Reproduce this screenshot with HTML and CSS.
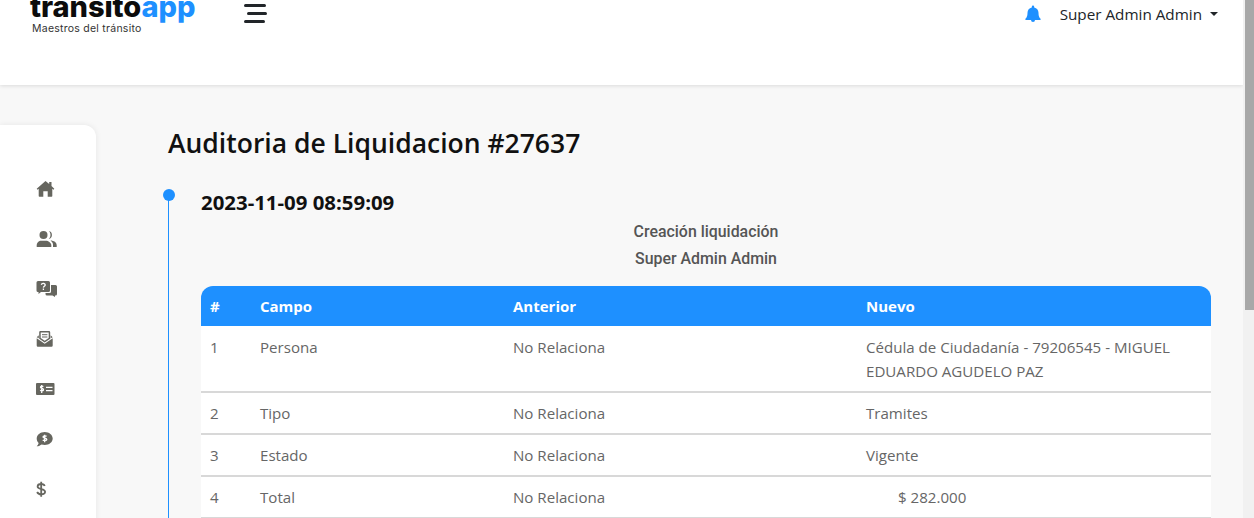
FILE: index.html
```html
<!DOCTYPE html>
<html lang="es">
<head>
<meta charset="utf-8">
<title>Auditoria de Liquidacion #27637</title>
<link rel="stylesheet" href="styles.css">
</head>
<body>
<div class="shell">
  <div class="page">
    <header class="topbar">
      <div class="brand">
        <div class="logo">tránsito<span class="logo-app">app</span></div>
        <div class="tagline">Maestros del tránsito</div>
      </div>
      <div class="burger"><span class="bar bar-a"></span><span class="bar bar-b"></span><span class="bar bar-c"></span></div>
      <div class="user">
        <svg class="bell" viewBox="0 0 16 18"><path d="M8 0.500a1.200 1.200 0 0 1 1.200 1.200v.7c2.600.5 4.300 2.600 4.300 5.300 0 3.900 1.100 5 2 6 .4.500.1 1.300-.6 1.300H1.100c-.7 0-1-.8-.6-1.300.9-1 2-2.100 2-6 0-2.700 1.700-4.800 4.300-5.300v-.7A1.200 1.200 0 0 1 8 .5zM6 15h4a2 2 0 0 1-4 0z"/></svg>
        <span class="user-name">Super Admin Admin</span>
        <span class="caret"></span>
      </div>
    </header>
    <div class="workspace">
      <nav class="sidebar">
        <svg class="nav-icon" viewBox="0 0 22 20"><path d="M9.500 2 .7 9.800l.8.9L2.700 9.700V17a.7.7 0 0 0 .7.700h3.900v-5.500h4.400v5.500h3.900a.7.7 0 0 0 .7-.7V9.700l1.200 1 .8-.9L15.500 7V3h-2.300v2L9.500 2z"/></svg>
        <svg class="nav-icon" viewBox="0 0 22 20"><circle cx="7.500" cy="6" r="4"/><path d="M.7 18v-1.800C.7 13.500 3 11.700 5 11.700h5c2 0 5.300 1.800 5.300 4.500V18z"/><path d="M12.800 2.100a4 4 0 0 1 0 7.800c1.100-1 1.700-2.400 1.700-3.900s-.6-2.900-1.700-3.900zM14.500 11.600c3.400.1 6.200 1.900 6.200 4.600V18h-3.700v-2c0-1.800-.9-3.200-2.500-4.400z"/></svg>
        <svg class="nav-icon" viewBox="0 0 22 20"><path d="M2 2h10.500A1.500 1.500 0 0 1 14 3.500v8a1.500 1.500 0 0 1-1.500 1.500H5l-2.500 2v-2H2A1.500 1.500 0 0 1 .5 11.500v-8A1.500 1.500 0 0 1 2 2z"/><path d="M15 6h4.500A1.500 1.500 0 0 1 21 7.500V15a1.500 1.500 0 0 1-1.500 1.500H19v1.500l-2.500-1.500H11a1.500 1.500 0 0 1-1.500-1.500V14h4A1.500 1.500 0 0 0 15 12.500z"/><path class="nav-cut-line" d="M5.300 5.700c.3-1 1.300-1.400 2.200-1.300 1 .1 1.800.8 1.700 1.700-.1 1.200-1.700 1.200-1.800 2.500M7.400 9.500v1.500"/></svg>
        <svg class="nav-icon" viewBox="0 0 22 20"><path d="M.7 9.200 8.700 14.800l8-5.600v7.300a1.200 1.200 0 0 1-1.200 1.200H1.900A1.200 1.200 0 0 1 .7 16.500z"/><path d="M3.200 9.700V3.200A1.200 1.200 0 0 1 4.400 2h8.600a1.200 1.200 0 0 1 1.200 1.200v6.500l-5.500 3.900zM4.700 3.500v5.500l4 2.800 4-2.800V3.500z" fill-rule="evenodd"/><path class="nav-dark-line" d="M6 5.700h5.400M6 8h5.400"/><path d="M2.800 6.200v3L.7 8.200zM14.600 6.200v3l2.100-1z"/></svg>
        <svg class="nav-icon" viewBox="0 0 22 20"><rect x="0" y="4" width="18.500" height="12" rx="1"/><path class="nav-cut-line" d="M10 8.300h6.500M10 11.700h6.500M7.300 7.700c-.5-.7-2.800-.9-2.800.5 0 1.500 3 .9 3 2.500 0 1.400-2.600 1.300-3.200.4M5.700 6v8"/></svg>
        <svg class="nav-icon" viewBox="0 0 22 20"><path d="M8.700 3c4.400 0 8 2.900 8 6.500s-3.600 6.500-8 6.500c-1.100 0-2.200-.2-3.100-.5C4.500 16.300 2.800 17.300.7 17.300c1-.9 1.800-2.200 1.900-3.300C1.400 12.800.7 11.200.7 9.500.7 5.900 4.300 3 8.700 3z"/><path class="nav-cut-line" d="M10.600 7.400c-.4-.7-3.600-1-3.600.5 0 1.500 3.800.9 3.800 2.500 0 1.400-3.300 1.300-4 .4M8.700 5.800v7.400"/></svg>
        <svg class="nav-icon" viewBox="0 0 22 20"><path class="nav-dollar" d="M8.700 7C8.200 5.500 6.700 5 5.200 5 3.200 5 1.600 6 1.600 7.500c0 3.500 7.500 1.500 7.500 5.300 0 1.500-2 2.500-4 2.500-1.700 0-3.300-.8-4-2.300M5.200 2.800v14.900"/></svg>
      </nav>
      <main class="content">
        <h1 class="title">Auditoria de Liquidacion #27637</h1>
        <section class="timeline">
          <span class="dot"></span>
          <h2 class="date">2023-11-09 08:59:09</h2>
          <p class="meta">Creación liquidación</p>
          <p class="meta">Super Admin Admin</p>
          <table class="grid">
            <thead>
              <tr><th class="c-id">#</th><th class="c-field">Campo</th><th class="c-old">Anterior</th><th class="c-new">Nuevo</th></tr>
            </thead>
            <tbody>
              <tr><td>1</td><td>Persona</td><td>No Relaciona</td><td>Cédula de Ciudadanía - 79206545 - MIGUEL EDUARDO AGUDELO PAZ</td></tr>
              <tr><td>2</td><td>Tipo</td><td>No Relaciona</td><td>Tramites</td></tr>
              <tr><td>3</td><td>Estado</td><td>No Relaciona</td><td>Vigente</td></tr>
              <tr><td>4</td><td>Total</td><td>No Relaciona</td><td><span class="money">$ 282.000</span></td></tr>
            </tbody>
          </table>
        </section>
      </main>
    </div>
  </div>
  <div class="scrollbar"><div class="thumb"></div></div>
</div>
</body>
</html>
```
FILE: styles.css
```css
html, body {
  margin: 0;
  height: 518px;
  overflow: hidden;
  background: #f8f8f8;
  font-family: "Open Sans", "Noto Sans", sans-serif;
}
.shell {
  display: flex;
  height: 518px;
  overflow: hidden;
}
.page {
  flex: 1;
  min-width: 0;
  display: flex;
  flex-direction: column;
}
.topbar {
  flex: none;
  height: 85px;
  background: #fff;
  box-shadow: 0 1px 4px rgba(0, 0, 0, .12);
  display: flex;
  align-items: flex-start;
  padding: 0 25px 0 30px;
  box-sizing: border-box;
}
.brand {
  margin-top: -11px;
  width: 214px;
}
.logo {
  font-family: Inter, sans-serif;
  font-weight: 800;
  font-size: 29px;
  line-height: 36px;
  letter-spacing: -.07px;
  color: #0c0c0c;
  white-space: nowrap;
}
.logo-app { color: #1e90ff; }
.tagline {
  font-family: Inter, sans-serif;
  font-size: 10.500px;
  line-height: 12px;
  margin: -2px 0 0 2px;
  color: #333;
  letter-spacing: .25px;
  white-space: nowrap;
}
.burger {
  display: flex;
  flex-direction: column;
  gap: 5px;
  margin-top: 4px;
  width: 24px;
}
.bar {
  display: block;
  height: 3px;
  border-radius: 2px;
  background: #212529;
}
.bar-a { width: 22px; }
.bar-b { width: 20px; margin-left: 3px; }
.bar-c { width: 21px; }
.user {
  margin-left: auto;
  display: flex;
  align-items: center;
  height: 28px;
}
.bell {
  width: 16px;
  height: 18px;
  fill: #1e90ff;
  margin-right: 19px;
}
.user-name {
  font-size: 15.250px;
  color: #212529;
}
.caret {
  width: 0;
  height: 0;
  margin-left: 8px;
  border-top: 4.500px solid #212529;
  border-left: 4.500px solid transparent;
  border-right: 4.500px solid transparent;
}
.workspace {
  flex: 1;
  display: flex;
  align-items: flex-start;
  min-height: 0;
}
.sidebar {
  flex: none;
  width: 60px;
  height: 420px;
  margin-top: 40px;
  padding: 54px 0 0 36px;
  background: #fff;
  border-radius: 0 12px 0 0;
  box-shadow: 0 0 6px rgba(0, 0, 0, .08);
  display: flex;
  flex-direction: column;
  gap: 30px;
}
.nav-icon {
  width: 22px;
  height: 20px;
  flex: none;
  fill: #66665f;
}
.nav-cut-line {
  fill: none;
  stroke: #fff;
  stroke-width: 1.300;
}
.nav-dark-line {
  fill: none;
  stroke: #66665f;
  stroke-width: 1;
}
.nav-dollar {
  fill: none;
  stroke: #66665f;
  stroke-width: 1.800;
}
.content {
  flex: 1;
  min-width: 0;
  padding: 0 32px 0 72px;
}
.title {
  margin: 38px 0 0;
  font-size: 26.500px;
  line-height: 40px;
  font-weight: 600;
  color: #111;
}
.timeline {
  display: flow-root;
  position: relative;
  margin-top: 32px;
  border-left: 1px solid #1e90ff;
  padding: 0 0 40px 32px;
}
.dot {
  position: absolute;
  left: -6px;
  top: -6px;
  width: 12px;
  height: 12px;
  border-radius: 50%;
  background: #1e90ff;
}
.date {
  margin: -9px 0 0;
  font-size: 20.400px;
  line-height: 32px;
  font-weight: 700;
  color: #111;
}
.meta {
  margin: 0;
  font-family: Roboto, sans-serif;
  font-weight: 500;
  font-size: 15.900px;
  line-height: 27px;
  text-align: center;
  color: #555;
}
.grid {
  width: 100%;
  margin-top: 14px;
  border-collapse: separate;
  border-spacing: 0;
  table-layout: fixed;
  font-size: 15.100px;
  line-height: 24px;
  color: #666;
}
.grid th {
  height: 40px;
  padding: 0 9px;
  box-sizing: border-box;
  background: #1e90ff;
  color: #fff;
  font-weight: 700;
  font-size: 15px;
  text-align: left;
}
.grid th:first-child { border-top-left-radius: 12px; }
.grid th:last-child { border-top-right-radius: 12px; }
.c-id { width: 50px; }
.c-field { width: 253px; }
.c-old { width: 353px; }
.grid td {
  padding: 8px 9px;
  background: #fff;
  border-bottom: 2px solid #d8d8d8;
  vertical-align: top;
}
.grid tbody tr:first-child td { padding-top: 9px; }
.money { margin-left: 32px; }
.scrollbar {
  flex: none;
  width: 11px;
  background: #f1f1f1;
  display: flex;
  justify-content: flex-end;
}
.thumb {
  width: 9px;
  height: 310px;
  background: #a8a8a8;
}
```
